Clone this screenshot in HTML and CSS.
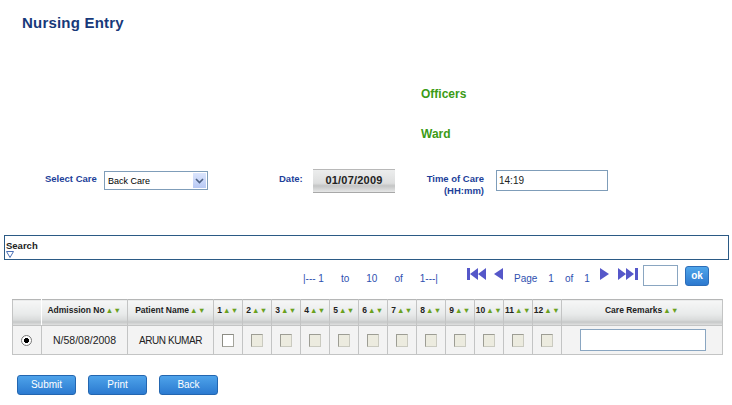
FILE: index.html
```html
<!DOCTYPE html>
<html>
<head>
<meta charset="utf-8">
<link rel="stylesheet" href="styles.css">
</head>
<body>
<h1 class="title">Nursing Entry</h1>
<div class="info">
  <div class="info-item">Officers</div>
  <div class="info-item">Ward</div>
</div>
<div class="form-row">
  <label class="lbl lbl-care">Select Care</label>
  <div class="select">
    <span class="select-text">Back Care</span>
    <span class="select-btn"><svg width="9" height="6" viewBox="0 0 9 6"><path d="M1 1 L4.5 4.5 L8 1" fill="none" stroke="#4d6185" stroke-width="1.6"/></svg></span>
  </div>
  <label class="lbl lbl-date">Date:</label>
  <div class="date-btn">01/07/2009</div>
  <label class="lbl lbl-time">Time of Care<br>(HH:mm)</label>
  <div class="time-input">14:19</div>
</div>
<div class="search">
  <div class="search-title">Search</div>
  <svg class="search-tri" width="8" height="7" viewBox="0 0 8 7"><path d="M0.5 0.5 H7.5 L4 6.5 Z" fill="none" stroke="#4a6fb5" stroke-width="1"/></svg>
</div>
<div class="pager">
  <div class="range"><span>|--- 1</span><span>to</span><span>10</span><span>of</span><span>1---|</span></div>
  <svg class="pico first" width="20" height="12" viewBox="0 0 20 12"><rect x="0" y="0" width="3" height="12" fill="#5557c9"/><path d="M11 0 L3 6 L11 12 Z M19 0 L11 6 L19 12 Z" fill="#5557c9"/></svg>
  <svg class="pico prev" width="9" height="12" viewBox="0 0 9 12"><path d="M9 0 L0 6 L9 12 Z" fill="#5557c9"/></svg>
  <div class="pagetext"><span>Page</span><span>1</span><span>of</span><span>1</span></div>
  <svg class="pico next" width="9" height="12" viewBox="0 0 9 12"><path d="M0 0 L9 6 L0 12 Z" fill="#5557c9"/></svg>
  <svg class="pico last" width="20" height="12" viewBox="0 0 20 12"><path d="M0 0 L8 6 L0 12 Z M8 0 L16 6 L8 12 Z" fill="#5557c9"/><rect x="17" y="0" width="3" height="12" fill="#5557c9"/></svg>
  <div class="page-input"></div>
  <div class="ok-btn">ok</div>
</div>
<table class="grid">
  <colgroup>
    <col class="c-radio"><col class="c-adm"><col class="c-name">
    <col class="c-n"><col class="c-n"><col class="c-n"><col class="c-n"><col class="c-n"><col class="c-n">
    <col class="c-n"><col class="c-n"><col class="c-n"><col class="c-n"><col class="c-n"><col class="c-n">
    <col class="c-rem">
  </colgroup>
  <thead>
    <tr>
      <th></th>
      <th>Admission No<span class="sort">▲▼</span></th>
      <th>Patient Name<span class="sort">▲▼</span></th>
      <th>1<span class="sort">▲▼</span></th>
      <th>2<span class="sort">▲▼</span></th>
      <th>3<span class="sort">▲▼</span></th>
      <th>4<span class="sort">▲▼</span></th>
      <th>5<span class="sort">▲▼</span></th>
      <th>6<span class="sort">▲▼</span></th>
      <th>7<span class="sort">▲▼</span></th>
      <th>8<span class="sort">▲▼</span></th>
      <th>9<span class="sort">▲▼</span></th>
      <th>10<span class="sort">▲▼</span></th>
      <th>11<span class="sort">▲▼</span></th>
      <th>12<span class="sort">▲▼</span></th>
      <th>Care Remarks<span class="sort">▲▼</span></th>
    </tr>
  </thead>
  <tbody>
    <tr>
      <td><span class="radio"></span></td>
      <td>N/58/08/2008</td>
      <td class="name">ARUN KUMAR</td>
      <td><span class="cb"></span></td>
      <td><span class="cb dis"></span></td>
      <td><span class="cb dis"></span></td>
      <td><span class="cb dis"></span></td>
      <td><span class="cb dis"></span></td>
      <td><span class="cb dis"></span></td>
      <td><span class="cb dis"></span></td>
      <td><span class="cb dis"></span></td>
      <td><span class="cb dis"></span></td>
      <td><span class="cb dis"></span></td>
      <td><span class="cb dis"></span></td>
      <td><span class="cb dis"></span></td>
      <td><span class="rem-input"></span></td>
    </tr>
  </tbody>
</table>
<div class="buttons">
  <div class="btn">Submit</div>
  <div class="btn">Print</div>
  <div class="btn">Back</div>
</div>
</body>
</html>
```
FILE: styles.css
```css
html, body {
  margin: 0;
  padding: 0;
  background: #ffffff;
  width: 732px;
  height: 405px;
  overflow: hidden;
  font-family: "Liberation Sans", Arial, sans-serif;
}

.title {
  margin: 0;
  padding: 13px 0 0 22px;
  height: 20px;
  font-size: 15px;
  line-height: 20px;
  font-weight: bold;
  color: #17397a;
  letter-spacing: 0.2px;
}

.info {
  padding: 54px 0 0 421px;
  display: flex;
  flex-direction: column;
  gap: 26px;
}

.info-item {
  font-size: 12px;
  line-height: 14px;
  font-weight: bold;
  color: #3b9b16;
}

.form-row {
  display: flex;
  align-items: flex-start;
  padding: 30px 0 0 45px;
  height: 40px;
}

.lbl {
  font-size: 9.5px;
  font-weight: bold;
  color: #1d3f9a;
  line-height: 12px;
}

.lbl-care {
  margin-top: 2px;
  width: 59px;
}

.select {
  width: 102px;
  height: 17px;
  border: 1px solid #7f9db9;
  display: flex;
  align-items: center;
  justify-content: space-between;
  background: #fff;
}

.select-text {
  font-size: 9px;
  color: #000;
  padding-left: 3px;
}

.select-btn {
  width: 13px;
  height: 15px;
  margin-right: 1px;
  background: linear-gradient(#dbe5fd, #b8c9f4);
  display: flex;
  align-items: center;
  justify-content: center;
}

.lbl-date {
  margin-left: 71px;
  margin-top: 2px;
  width: 34px;
}

.date-btn {
  margin-top: -2px;
  width: 82px;
  height: 24px;
  box-sizing: border-box;
  background: linear-gradient(#eceded 0%, #dddede 60%, #c4c5c5 72%, #e6e7e7 100%);
  border-top: 1px solid #b8b8b8;
  border-bottom: 1px solid #a8a8a8;
  font-size: 11px;
  font-weight: bold;
  color: #222;
  text-align: center;
  line-height: 20px;
  letter-spacing: 0.2px;
}

.lbl-time {
  margin-left: 24px;
  margin-top: 2px;
  width: 65px;
  text-align: right;
  white-space: nowrap;
}

.time-input {
  margin-left: 12px;
  margin-top: -1px;
  width: 108px;
  height: 19px;
  border: 1px solid #7f9db9;
  font-size: 10px;
  line-height: 19px;
  padding-left: 2px;
  box-sizing: content-box;
  color: #222;
}

.search {
  margin: 24px 3px 0 4px;
  height: 23px;
  border: 1px solid #2b5a85;
}

.search-title {
  font-size: 9.5px;
  font-weight: bold;
  color: #222;
  line-height: 11px;
  padding: 4px 0 0 1px;
}

.search-tri {
  display: block;
  margin: 0 0 0 1px;
}

.pager {
  display: flex;
  align-items: center;
  height: 21px;
  margin-top: 5px;
  padding-left: 303px;
}

.range {
  display: flex;
  gap: 17px;
  font-size: 10px;
  color: #2e4fb0;
  width: 137px;
  margin-top: 5px;
}

.pico {
  display: block;
  margin-top: -4px;
}

.first { margin-left: 27px; }
.prev { margin-left: 7px; }

.pagetext {
  display: flex;
  gap: 11px;
  font-size: 10px;
  color: #2e4fb0;
  margin-left: 11px;
  margin-top: 5px;
  width: 86px;
}

.next { margin-left: 0; }
.last { margin-left: 9px; }

.page-input {
  margin-left: 5px;
  width: 33px;
  height: 19px;
  border: 1px solid #8aa6c1;
  background: #fff;
}

.ok-btn {
  margin-left: 7px;
  width: 24px;
  height: 20px;
  border-radius: 3px;
  background: linear-gradient(#4fa5ea, #2c78cf);
  border: 1px solid #2c6db8;
  box-sizing: border-box;
  color: #fff;
  font-size: 10px;
  font-weight: bold;
  text-align: center;
  line-height: 18px;
}

.grid {
  margin: 13px 0 0 12px;
  border-collapse: collapse;
  table-layout: fixed;
  width: 710px;
}

.c-radio { width: 29px; }
.c-adm { width: 86px; }
.c-name { width: 86px; }
.c-n { width: 29px; }
.c-rem { width: 161px; }

.grid th {
  height: 26px;
  padding: 0;
  border: 1px solid #c3c4c4;
  border-top-color: #b5b6b6;
  background: linear-gradient(#f6f7f7 0%, #e8eaea 55%, #d9dbdb 78%, #c6c8c8 86%, #e3e4e4 100%);
  font-size: 8.5px;
  font-weight: bold;
  color: #222;
  text-align: center;
  vertical-align: top;
  line-height: 10px;
  padding-top: 5px;
  white-space: nowrap;
  box-sizing: border-box;
}

.grid th:first-child {
  border-right-color: #ffffff;
}

.sort {
  color: #6aa11e;
  font-size: 7.5px;
  letter-spacing: 0.5px;
  margin-left: 1px;
}

.grid td {
  height: 29px;
  padding: 0;
  border: 1px solid #c3c4c4;
  background: #f3f3f3;
  font-size: 10.5px;
  color: #222;
  text-align: center;
  vertical-align: middle;
  box-sizing: border-box;
}

.grid td.name {
  font-size: 10px;
  letter-spacing: -0.4px;
}

.radio {
  display: inline-block;
  width: 11px;
  height: 11px;
  box-sizing: border-box;
  border-radius: 50%;
  border: 1px solid #777;
  background: radial-gradient(circle, #000 0 2.3px, #fff 2.8px);
  vertical-align: middle;
  margin-left: -2px;
}

.cb {
  display: inline-block;
  width: 12px;
  height: 13px;
  box-sizing: border-box;
  background: #fff;
  border: 1px solid #a4a49c;
  border-top-color: #8c8c84;
  border-left-color: #8c8c84;
  vertical-align: middle;
  margin-left: -1px;
}

.cb.dis {
  background: #ecebdf;
  border-color: #cacac0;
  border-top-color: #9d9d94;
  border-left-color: #9d9d94;
}

.rem-input {
  display: inline-block;
  width: 126px;
  height: 22px;
  box-sizing: border-box;
  background: #fff;
  border: 1px solid #8aa6c1;
  vertical-align: middle;
  margin-left: 1px;
}

.buttons {
  display: flex;
  gap: 12px;
  padding: 20px 0 0 17px;
}

.btn {
  width: 59px;
  height: 20px;
  box-sizing: border-box;
  border-radius: 3px;
  background: linear-gradient(#4ea3ea, #2b7ad0);
  border: 1px solid #2366b0;
  color: #fff;
  font-size: 10px;
  text-align: center;
  line-height: 18px;
}
```
